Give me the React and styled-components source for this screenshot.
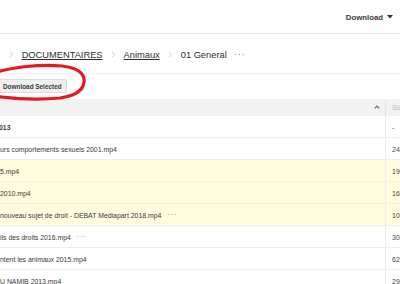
import React from "react";
import styled, { createGlobalStyle } from "styled-components";

const Global = createGlobalStyle`
  html, body { margin: 0; padding: 0; background: #fff; }
  body { font-family: "Liberation Sans", Arial, sans-serif; color: #333; }
`;

const Page = styled.div`
  position: relative;
  width: 400px;
  height: 284px;
  overflow: hidden;
  background: #fff;
`;

const TopBar = styled.div`
  height: 33px;
  border-bottom: 1px solid #ebebeb;
  display: flex;
  align-items: center;
  justify-content: flex-end;
  padding-right: 7px;
`;

const MenuButton = styled.div`
  display: flex;
  align-items: center;
  gap: 4px;
  font-size: 7.8px;
  font-weight: 700;
  color: #3a3a3a;
  margin-top: 1px;
`;

const Crumbs = styled.div`
  height: 40px;
  border-bottom: 1px solid #efefef;
  display: flex;
  align-items: center;
  margin-left: -25px;
  font-size: 9.3px;
  color: #333;
  padding-top: 2px;
  box-sizing: border-box;
`;

const Crumb = styled.span`
  text-decoration: ${(p) => (p.$link ? "underline" : "none")};
  text-underline-offset: 1px;
  color: #2e2e2e;
  white-space: nowrap;
`;

const Sep = styled.span`
  display: inline-flex;
  margin: 0 8px 0 ${(p) => p.$left || 8}px;
  color: #ccc;
`;

const Dots = styled.span`
  margin-left: ${(p) => p.$gap || 7}px;
  color: #777;
  letter-spacing: 1px;
  font-size: ${(p) => p.$size || 9}px;
  position: relative;
  top: -1px;
`;

const Toolbar = styled.div`
  height: 25px;
  display: flex;
  align-items: flex-start;
`;

const SelButton = styled.div`
  margin-top: 5px;
  margin-left: -3px;
  height: 14px;
  box-sizing: border-box;
  padding: 0 4px 0 5px;
  background: #f0f0f0;
  border: 1px solid #dcdcdc;
  border-radius: 2px;
  display: flex;
  align-items: center;
  font-size: 6.4px;
  font-weight: 700;
  color: #3b3b3b;
  white-space: nowrap;
`;

const Circle = styled.svg`
  position: absolute;
  left: 0;
  top: 58px;
  pointer-events: none;
`;

const Table = styled.div`
  display: flex;
  flex-direction: column;
`;

const Row = styled.div`
  display: grid;
  grid-template-columns: 385px 15px;
  height: ${(p) => (p.$head ? 17 : 22)}px;
  box-sizing: border-box;
  background: ${(p) => (p.$head ? "#f2f2f2" : p.$hl ? "#fefcdc" : "#fff")};
  border-bottom: 1px solid ${(p) => (p.$head ? "#f2f2f2" : "#efefef")};
  font-size: 6.9px;
  color: #3a3a3a;
`;

const NameCell = styled.div`
  display: flex;
  align-items: center;
  white-space: nowrap;
  overflow: hidden;
  padding-top: ${(p) => (p.$head ? 0 : 2)}px;
  justify-content: ${(p) => (p.$head ? "flex-end" : "flex-start")};
  padding-right: ${(p) => (p.$head ? 5 : 0)}px;
  font-weight: ${(p) => (p.$bold ? 700 : 400)};
  margin-left: ${(p) => (p.$bold ? -1 : 0)}px;
`;

const SizeCell = styled.div`
  display: flex;
  align-items: center;
  border-left: 1px solid ${(p) => (p.$head ? "#e6e6e6" : "#ececec")};
  padding-left: 6px;
  padding-top: ${(p) => (p.$head ? 0 : 2)}px;
  white-space: nowrap;
  overflow: hidden;
  color: ${(p) => (p.$head ? "#bbb" : "#444")};
  font-size: 7px;
`;

const Chevron = () => (
  <svg width="5" height="7" viewBox="0 0 5 7">
    <path d="M1 1 L3.5 3.5 L1 6" fill="none" stroke="#cfcfcf" strokeWidth="1" />
  </svg>
);

const Caret = () => (
  <svg width="6" height="4" viewBox="0 0 6 4">
    <path d="M0 0 H6 L3 3.5 Z" fill="#333" />
  </svg>
);

const Up = () => (
  <svg width="6" height="4" viewBox="0 0 6 4">
    <path d="M0.8 3.3 L3 1 L5.2 3.3" fill="none" stroke="#666" strokeWidth="1.1" />
  </svg>
);

const rows = [
  { name: "013", size: "-", bold: true },
  { name: "urs comportements sexuels 2001.mp4", size: "24.1 MB" },
  { name: "5.mp4", size: "19.8 MB", hl: true },
  { name: "2010.mp4", size: "16.2 MB", hl: true },
  { name: "nouveau sujet de droit - DEBAT Mediapart 2018.mp4", size: "10.4 MB", hl: true, dots: true },
  { name: "ils des droits 2016.mp4", size: "30.7 MB", dots: true },
  { name: "ntent les animaux 2015.mp4", size: "62.3 MB" },
  { name: "U NAMIB 2013.mp4", size: "29.5 MB" },
];

export default function App() {
  return (
    <>
      <Global />
      <Page>
        <TopBar>
          <MenuButton>
            Download <Caret />
          </MenuButton>
        </TopBar>
        <Crumbs>
          <Crumb $link>Video</Crumb>
          <Sep $left={10}><Chevron /></Sep>
          <Crumb $link>DOCUMENTAIRES</Crumb>
          <Sep><Chevron /></Sep>
          <Crumb $link>Animaux</Crumb>
          <Sep><Chevron /></Sep>
          <Crumb>01 General</Crumb>
          <Dots>···</Dots>
        </Crumbs>
        <Toolbar>
          <SelButton>Download Selected</SelButton>
        </Toolbar>
        <Table>
          <Row $head>
            <NameCell $head><Up /></NameCell>
            <SizeCell $head>Size</SizeCell>
          </Row>
          {rows.map((r, i) => (
            <Row key={i} $hl={r.hl}>
              <NameCell $bold={r.bold}>
                {r.name}
                {r.dots && <Dots $gap={6} $size={7}>···</Dots>}
              </NameCell>
              <SizeCell>{r.size}</SizeCell>
            </Row>
          ))}
        </Table>
        <Circle width="95" height="48" viewBox="0 0 95 48">
          <path
            d="M-6 15 C 12 9, 40 6, 62 8 C 78 10, 85 16, 84 24 C 83 33, 74 38, 60 40 C 40 42, 15 41, -6 38"
            fill="none"
            stroke="#e41a1f"
            strokeWidth="3.2"
            strokeLinecap="round"
          />
        </Circle>
      </Page>
    </>
  );
}
